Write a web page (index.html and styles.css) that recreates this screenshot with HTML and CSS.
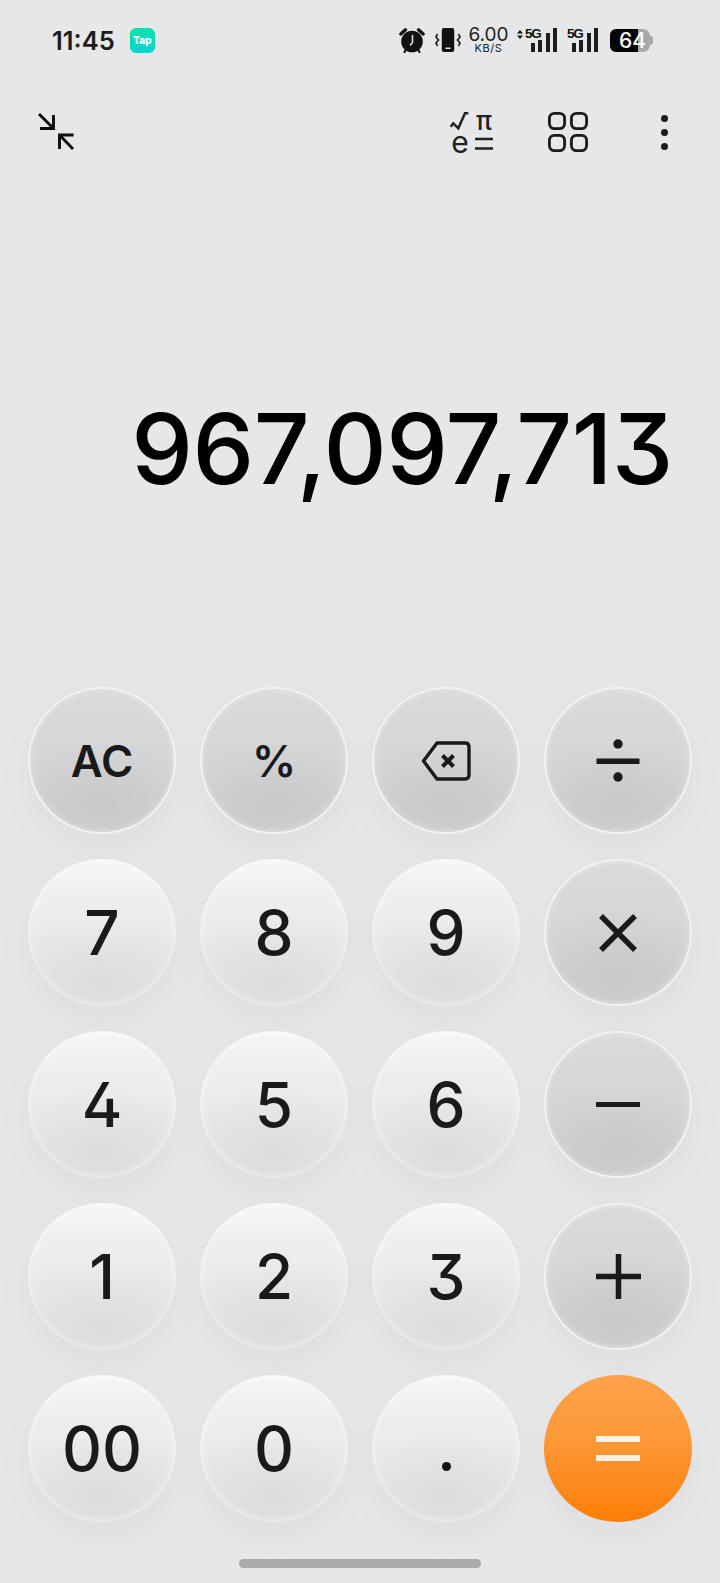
FILE: index.html
```html
<!DOCTYPE html>
<html lang="en">
<head>
    <meta charset="UTF-8">
    <meta name="viewport" content="width=device-width, initial-scale=1.0">
    <title>Calculator</title>
    <link rel="stylesheet" href="styles.css">
</head>
<body>
    <div class="screen">
        <div class="status">
            <div class="status-left">
                <span class="clock">11:45</span>
                <span class="tap"><span>Tap</span></span>
            </div>
            <div class="status-right">
                <svg class="ic-alarm" width="26" height="26" viewBox="0 0 26 26">
                    <circle cx="13" cy="14.500" r="10.800" fill="#111"/>
                    <path d="M1.800 7 L6.500 2.800 M24.200 7 L19.500 2.800" stroke="#111" stroke-width="3.200" stroke-linecap="round"/>
                    <path d="M6.500 23.500 L5.500 25 M19.500 23.500 L20.500 25" stroke="#111" stroke-width="2.200" stroke-linecap="round"/>
                    <path d="M13.500 8 V15.500 L11 18.500" stroke="#e6e7e9" stroke-width="1.500" fill="none"/>
                </svg>
                <svg class="ic-vibrate" width="26" height="26" viewBox="0 0 26 26">
                    <rect x="6.800" y="1" width="12.400" height="24" rx="2" fill="#111"/>
                    <rect x="10.500" y="20.500" width="5" height="1.500" fill="#e6e7e9"/>
                    <path d="M2.500 7 L1 10 L3.500 13 L1 16 L2.500 19 M23.500 7 L25 10 L22.500 13 L25 16 L23.500 19" stroke="#111" stroke-width="1.600" fill="none"/>
                </svg>
                <div class="speed">
                    <span class="speed-val">6.00</span>
                    <span class="speed-unit">KB/S</span>
                </div>
                <div class="signal signal-first">
                    <span class="arrows">
                        <svg width="6" height="9" viewBox="0 0 6 9"><path d="M3 0 L6 3.500 H0 Z M3 9 L6 5.500 H0 Z" fill="#111"/></svg>
                    </span>
                    <span class="net">5G</span>
                    <span class="bars"><i class="b1"></i><i class="b2"></i><i class="b3"></i><i class="b4"></i></span>
                </div>
                <div class="signal signal-second">
                    <span class="net">5G</span>
                    <span class="bars"><i class="b1"></i><i class="b2"></i><i class="b3"></i><i class="b4"></i></span>
                </div>
                <div class="battery">
                    <span class="battery-fill"></span>
                    <span class="battery-num">64</span>
                </div>
            </div>
        </div>

        <div class="toolbar">
            <svg width="40" height="42" viewBox="0 0 40 42" class="tool-shrink">
                <g stroke="#0c0c0c" stroke-width="2.900" fill="none">
                    <path d="M1 1 L15.500 15.500 M15.500 2 V15.500 H2"/>
                    <path d="M35 36 L21.500 22 M35.500 22 H21.500 V36"/>
                </g>
            </svg>
            <div class="tools-right">
                <svg width="48" height="46" viewBox="0 0 48 46" class="tool-sci">
                    <path d="M2.700 16.700 L5.300 13.300 L10.300 18.300 L17 3.300 H20.300" stroke="#222" stroke-width="2.500" fill="none"/>
                    <text x="36" y="20" class="sci-pi">π</text>
                    <text x="12" y="43" class="sci-e">e</text>
                    <path d="M27 29 H45 M27 38.500 H45" stroke="#222" stroke-width="2.600"/>
                </svg>
                <svg width="40" height="40" viewBox="0 0 40 40" class="tool-grid">
                    <g fill="none" stroke="#1a1a1a" stroke-width="2.800">
                        <rect x="1.400" y="1.400" width="15.200" height="15.200" rx="5"/>
                        <rect x="23.400" y="1.400" width="15.200" height="15.200" rx="5"/>
                        <rect x="1.400" y="23.400" width="15.200" height="15.200" rx="5"/>
                        <rect x="23.400" y="23.400" width="15.200" height="15.200" rx="5"/>
                    </g>
                </svg>
                <div class="tool-dots"><i></i><i></i><i></i></div>
            </div>
        </div>

        <div class="display">967,097,713</div>

        <div class="keypad">
            <button class="key op small">AC</button>
            <button class="key op small">%</button>
            <button class="key op">
                <svg width="50" height="40" viewBox="0 0 50 40">
                    <path d="M16 2 H44 Q48 2 48 6 V34 Q48 38 44 38 H16 L2.500 20 Z" fill="none" stroke="#1a1a1a" stroke-width="3.400" stroke-linejoin="round"/>
                    <path d="M21.500 14.500 L32.500 25.500 M32.500 14.500 L21.500 25.500" stroke="#1a1a1a" stroke-width="4.200"/>
                </svg>
            </button>
            <button class="key op">
                <svg width="44" height="44" viewBox="0 0 44 44">
                    <circle cx="22" cy="5" r="4.700" fill="#1a1a1a"/>
                    <rect x="0.500" y="19.500" width="43" height="5.500" fill="#1a1a1a"/>
                    <circle cx="22" cy="38" r="4.700" fill="#1a1a1a"/>
                </svg>
            </button>
            <button class="key">7</button>
            <button class="key">8</button>
            <button class="key">9</button>
            <button class="key op">
                <svg width="40" height="40" viewBox="0 0 40 40">
                    <path d="M3 3 L37 37 M37 3 L3 37" stroke="#1a1a1a" stroke-width="5.500"/>
                </svg>
            </button>
            <button class="key">4</button>
            <button class="key">5</button>
            <button class="key">6</button>
            <button class="key op">
                <svg width="44" height="5" viewBox="0 0 44 5"><rect width="44" height="5" fill="#1a1a1a"/></svg>
            </button>
            <button class="key">1</button>
            <button class="key">2</button>
            <button class="key">3</button>
            <button class="key op">
                <svg width="45" height="45" viewBox="0 0 45 45">
                    <path d="M0 22.500 H45 M22.500 0 V45" stroke="#1a1a1a" stroke-width="5.500"/>
                </svg>
            </button>
            <button class="key">00</button>
            <button class="key">0</button>
            <button class="key"><span class="dot"></span></button>
            <button class="key equals">
                <svg width="44" height="25" viewBox="0 0 44 25">
                    <rect width="44" height="6" fill="#fff3e2"/>
                    <rect y="19" width="44" height="6" fill="#fff3e2"/>
                </svg>
            </button>
        </div>

        <div class="home-bar"></div>
    </div>
</body>
</html>
```

FILE: styles.css
```css
* {
    box-sizing: border-box;
}
body {
    margin: 0;
    background-color: #e6e7e9;
    font-family: Inter, "Liberation Sans", sans-serif;
    color: #161616;
}
.screen {
    height: 1583px;
    overflow: hidden;
    display: flex;
    flex-direction: column;
}

/* status bar */
.status {
    height: 80px;
    display: flex;
    justify-content: space-between;
    align-items: center;
    padding: 0 67px 0 52px;
}
.status-left {
    display: flex;
    align-items: center;
    gap: 15px;
}
.clock {
    font-size: 25.500px;
    font-weight: 600;
    color: #1c1c1c;
}
.tap {
    width: 25px;
    height: 25px;
    border-radius: 6px;
    background: linear-gradient(#05e2ad, #08d4d5);
    display: flex;
    align-items: center;
    justify-content: center;
    color: white;
    font-size: 10.500px;
    font-weight: 800;
    letter-spacing: -0.3px;
}
.status-right {
    display: flex;
    align-items: center;
}
.ic-alarm {
    margin-right: 10px;
}
.ic-vibrate {
    margin-right: 8px;
}
.speed {
    display: flex;
    flex-direction: column;
    align-items: center;
    width: 39px;
    margin-right: 9px;
}
.speed-val {
    font-size: 19px;
    line-height: 16px;
    color: #222;
}
.speed-unit {
    font-size: 11px;
    line-height: 10px;
    letter-spacing: 0.6px;
    color: #222;
}
.signal {
    position: relative;
    height: 24px;
    display: flex;
    justify-content: flex-end;
}
.signal-first {
    width: 40px;
    margin-right: 10px;
}
.signal-second {
    width: 31px;
    margin-right: 12px;
}
.arrows {
    position: absolute;
    left: 0;
    top: 2px;
    line-height: 0;
}
.net {
    position: absolute;
    left: 0;
    top: -1px;
    font-family: "Liberation Sans", sans-serif;
    font-size: 13.500px;
    line-height: 13px;
    font-weight: 700;
    letter-spacing: -1.200px;
    color: #111;
}
.signal-first .net {
    left: 8px;
}
.bars {
    display: flex;
    align-items: flex-end;
    gap: 3.300px;
    height: 24px;
}
.bars i {
    width: 4px;
    background-color: #1c1c1c;
}
.bars .b1 {
    height: 9px;
}
.bars .b2 {
    height: 12px;
}
.bars .b3 {
    height: 19px;
}
.bars .b4 {
    height: 24px;
}
.battery {
    position: relative;
    width: 40px;
    height: 23px;
    margin-right: 3px;
    border-radius: 6px 7px 7px 6px;
    background-color: #a8a8a9;
}
.battery::after {
    content: "";
    position: absolute;
    right: -3px;
    top: 7px;
    width: 3px;
    height: 9px;
    border-radius: 0 3px 3px 0;
    background-color: #a8a8a9;
}
.battery-fill {
    position: absolute;
    left: 0;
    top: 0;
    bottom: 0;
    width: 28px;
    border-radius: 6px 0 0 6px;
    background-color: #050505;
}
.battery-num {
    position: absolute;
    left: 9px;
    top: 0;
    font-size: 21px;
    line-height: 23px;
    font-weight: 500;
    color: white;
}

/* toolbar */
.toolbar {
    height: 104px;
    display: flex;
    justify-content: space-between;
    align-items: center;
    padding: 0 52.500px 0 38px;
}
.tool-shrink {
    margin-top: 4px;
}
.tools-right {
    display: flex;
    align-items: center;
}
.tool-sci {
    margin-top: 2px;
    margin-right: 52px;
    overflow: visible;
}
.tool-grid {
    margin-right: 72.500px;
}
.tool-dots {
    display: flex;
    flex-direction: column;
    gap: 7px;
}
.tool-dots i {
    width: 7px;
    height: 7px;
    border-radius: 50%;
    background-color: #1c1c1c;
}
.sci-pi {
    font-size: 26px;
    font-weight: 500;
    fill: #222;
    text-anchor: middle;
}
.sci-e {
    font-size: 30px;
    fill: #222;
    text-anchor: middle;
}

/* number display */
.display {
    height: 503px;
    padding: 25px 47px 0 0;
    display: flex;
    align-items: center;
    justify-content: flex-end;
    font-size: 98px;
    font-weight: 500;
    font-feature-settings: "cv02", "cv09";
    letter-spacing: -0.500px;
    color: #000;
}

/* keypad */
.keypad {
    display: grid;
    grid-template-columns: repeat(4, 148px);
    grid-auto-rows: 147px;
    column-gap: 24px;
    row-gap: 25px;
    padding: 0 28px;
}
.key {
    border: 2px solid rgba(255, 255, 255, 0.3);
    border-radius: 50%;
    padding: 0;
    display: flex;
    align-items: center;
    justify-content: center;
    font-family: inherit;
    font-size: 62px;
    font-weight: 500;
    font-feature-settings: "cv02", "cv09";
    color: #1a1a1a;
    background-origin: border-box;
    background-image:
        radial-gradient(ellipse 70% 42% at 50% 82%, rgba(120, 122, 126, 0.1), rgba(120, 122, 126, 0)),
        linear-gradient(#f6f6f6 0%, #efefef 24%, #e9e9ea 55%, #e6e6e7 100%);
    box-shadow: inset 0 0 6px rgba(255, 255, 255, 0.4), 0 16px 34px rgba(90, 95, 105, 0.06);
}
.op {
    border-color: #f1f2f4;
    background-image:
        radial-gradient(ellipse 70% 45% at 50% 80%, rgba(110, 112, 116, 0.12), rgba(110, 112, 116, 0)),
        linear-gradient(#dadbdd 0%, #d7d8da 22%, #d4d5d7 60%, #d3d4d6 100%);
    box-shadow: inset 0 0 6px rgba(255, 255, 255, 0.45), 0 16px 34px rgba(90, 95, 105, 0.06);
}
.small {
    font-size: 44px;
    font-weight: 600;
}
.dot {
    width: 9px;
    height: 9px;
    border-radius: 50%;
    background-color: #111;
    margin-top: 35px;
}
.equals {
    border: none;
    background-image: linear-gradient(#fea24a 0%, #fd9a3a 40%, #fd8a1e 75%, #fe7d06 100%);
    box-shadow: 0 16px 34px rgba(90, 95, 105, 0.06);
}

.home-bar {
    width: 242px;
    height: 9px;
    border-radius: 5px;
    background-color: #a9aaab;
    margin: 37px auto 0;
}
```
